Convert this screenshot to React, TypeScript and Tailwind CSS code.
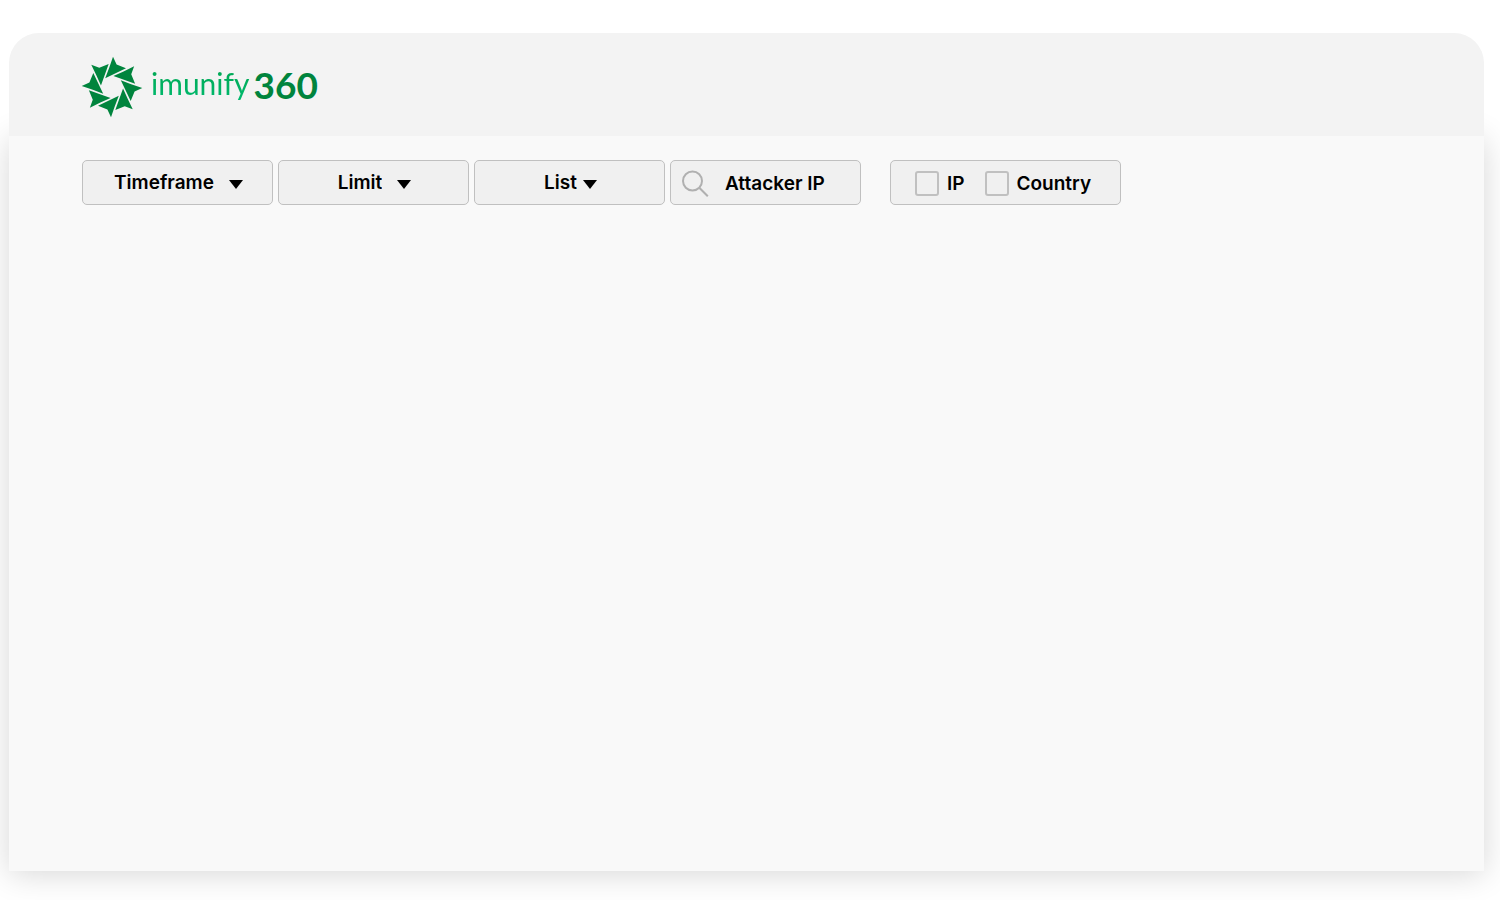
import type { ReactNode } from 'react';

const BLADE_ANGLES = [0, 45, 90, 135, 180, 225, 270, 315];

function Logo() {
  return (
    <a href="#" aria-label="imunify 360" className="flex items-center gap-2">
      <svg viewBox="-31 -31 62 62" className="size-[62px]" fill="#00843d" aria-hidden="true">
        {BLADE_ANGLES.map((angle) => (
          <path key={angle} d="M1-30.3 4.6-22.6 14-18.7-6.8-8.8-2.8-19.2Z" transform={`rotate(${angle})`} />
        ))}
      </svg>
      <span className="flex items-center gap-1 pb-1 font-['Lato'] leading-none">
        <span className="bg-linear-to-b from-[#00a651] to-[#00bb70] bg-clip-text pb-1 text-[30px] font-normal text-transparent">imunify</span>
        <span className="text-[37px] font-bold text-[#00843d]">360</span>
      </span>
    </a>
  );
}

interface FilterSelectProps {
  name: string;
  gap: string;
}

function FilterSelect({ name, gap }: FilterSelectProps) {
  return (
    <div className={`flex h-[45px] w-[191px] items-center justify-center rounded-[5px] border border-[#c0c0c0] bg-[#f0f0f0] pl-0.5 ${gap}`}>
      <select aria-label={name} className="field-sizing-content appearance-none bg-transparent outline-none">
        <option>{name}</option>
      </select>
      <svg viewBox="0 0 14 9" className="mt-1 h-[9px] w-[14px]" aria-hidden="true">
        <path d="M0 0h14L7 9Z" />
      </svg>
    </div>
  );
}

function CheckOption({ children }: { children: ReactNode }) {
  return (
    <label className="flex items-center gap-2">
      <input type="checkbox" className="h-[25px] w-6 appearance-none rounded-[3px] border-2 border-[#c0c0c0] checked:bg-[#00843d]" />
      <span>{children}</span>
    </label>
  );
}

export default function App() {
  return (
    <div className="flex min-h-screen flex-col overflow-hidden bg-white pt-[33px] pr-4 pb-[29px] pl-[9px] font-['Inter',sans-serif] text-[19px] leading-6 font-semibold text-black">
      <header className="relative flex h-[103px] items-center rounded-t-[30px] bg-[#f3f3f3] px-[72px] pt-1">
        <Logo />
      </header>
      <main className="flex-1 bg-[#f9f9f9] px-[73px] pt-6 shadow-[0_3px_30px_rgba(0,0,0,0.16)]">
        <form className="flex flex-wrap gap-[5px]">
          <FilterSelect name="Timeframe" gap="gap-[15px]" />
          <FilterSelect name="Limit" gap="gap-[15px]" />
          <FilterSelect name="List" gap="gap-[6px]" />
          <label className="flex h-[45px] w-[191px] items-center gap-4 rounded-[5px] border border-[#c0c0c0] bg-[#f0f0f0] pt-0.5 pl-[11px]">
            <svg viewBox="0 0 27 27" className="size-[27px] shrink-0" fill="none" stroke="#b0b0b0" strokeWidth="2" aria-hidden="true">
              <circle cx="10.5" cy="11" r="9.5" />
              <path d="m17.3 17.8 8.5 8.5" />
            </svg>
            <input type="text" placeholder="Attacker IP" aria-label="Attacker IP" className="w-full min-w-0 bg-transparent outline-none placeholder:text-black placeholder:opacity-100" />
          </label>
          <fieldset className="ml-6 flex h-[45px] w-[231px] items-center gap-5 rounded-[5px] border border-[#c0c0c0] bg-[#f0f0f0] pt-0.5 pl-6">
            <CheckOption>IP</CheckOption>
            <CheckOption>Country</CheckOption>
          </fieldset>
        </form>
      </main>
    </div>
  );
}
